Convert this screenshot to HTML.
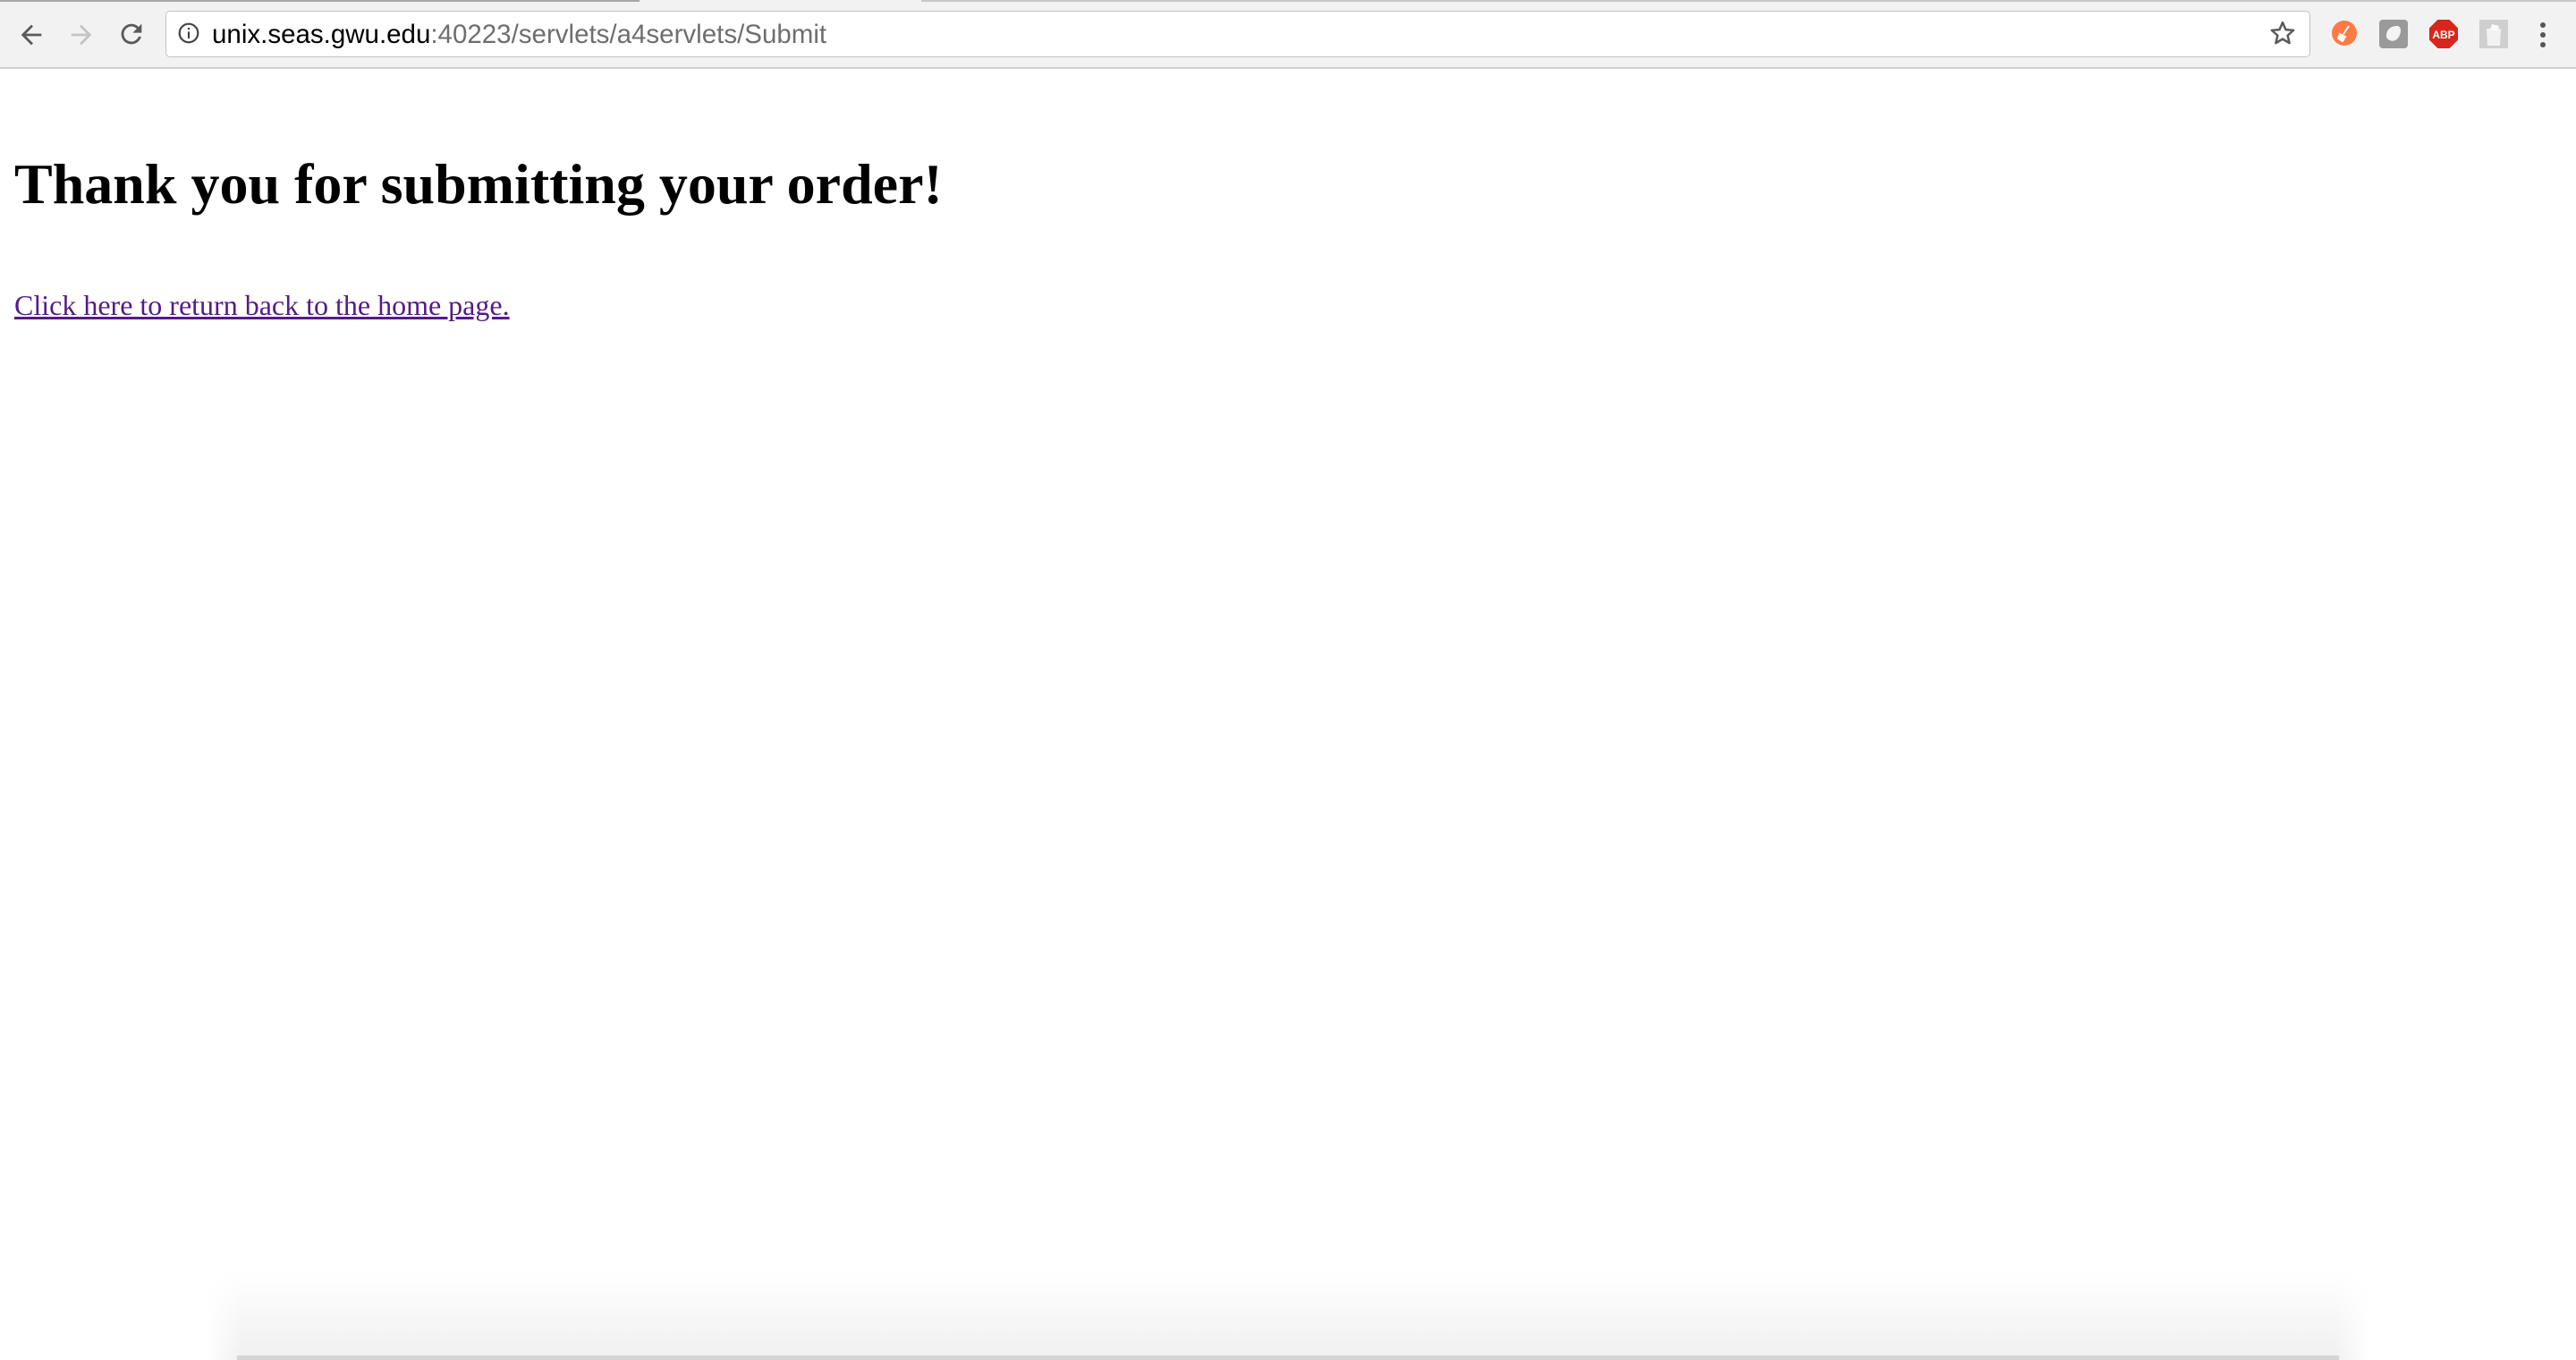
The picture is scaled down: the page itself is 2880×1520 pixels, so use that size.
<!DOCTYPE html>
<html><head><meta charset="utf-8"><style>
html,body{margin:0;padding:0;width:2880px;height:1520px;overflow:hidden;background:#fff;position:relative}
.tb{position:absolute;left:0;top:0;width:2880px;height:75px;background:#f2f2f2;border-bottom:2px solid #d0d0d0}
.tl{position:absolute;top:0;height:2px;background:#a8a8a8}
.addr{position:absolute;left:185px;top:12px;width:2396px;height:50px;background:#fff;border:1px solid #c4c4c4;border-radius:5px}
.url{position:absolute;left:237px;top:21px;font:29.5px "Liberation Sans",sans-serif;color:#000;white-space:nowrap;line-height:36px}
.url span{color:#6e6e6e}
svg{position:absolute}
h1{position:absolute;left:16px;top:174px;margin:0;font:bold 64px/1 "Liberation Serif",serif;white-space:nowrap}
a{position:absolute;left:16px;top:325px;font:32px/1 "Liberation Serif",serif;color:#551a8b;text-decoration:underline;white-space:nowrap}
.sh{position:absolute;left:230px;width:2420px;top:1420px;height:100px;background:linear-gradient(#fff,#f0f0f0);-webkit-mask:linear-gradient(90deg,transparent,#000 40px,#000 2380px,transparent);}
.bl{position:absolute;left:265px;width:2350px;top:1515px;height:5px;background:#d4d4d4}
</style></head><body>
<div class="tb"></div>
<div class="tl" style="left:0;width:715px"></div>
<div class="tl" style="left:1030px;width:1850px;background:#c8c8c8"></div>
<svg style="left:18px;top:22px" width="34" height="34" viewBox="0 0 24 24"><path d="M20 11H7.8l5.6-5.6L12 4l-8 8 8 8 1.4-1.4L7.8 13H20z" fill="#5a5a5a"/></svg>
<svg style="left:74px;top:22px" width="34" height="34" viewBox="0 0 24 24"><path d="M4 11h12.2l-5.6-5.6L12 4l8 8-8 8-1.4-1.4 5.6-5.6H4z" fill="#c4c4c4"/></svg>
<svg style="left:130px;top:21px" width="34" height="34" viewBox="0 0 24 24"><path d="M17.6 6.4A8 8 0 1 0 19.7 14h-2.1a6 6 0 1 1-1.4-6.2L13 11h7V4z" fill="#5a5a5a"/></svg>
<div class="addr"></div>
<svg style="left:198px;top:24px" width="26" height="26" viewBox="0 0 24 24"><circle cx="12" cy="12" r="9.5" fill="none" stroke="#444" stroke-width="2"/><rect x="11" y="10.5" width="2" height="7" fill="#444"/><rect x="11" y="6.5" width="2" height="2" fill="#444"/></svg>
<div class="url">unix.seas.gwu.edu<span>:40223/servlets/a4servlets/Submit</span></div>
<svg style="left:2537px;top:22px" width="30" height="30" viewBox="0 0 24 24"><path d="M12 2.5l2.8 6.4 6.9.6-5.2 4.6 1.6 6.8L12 17.3l-6.1 3.6 1.6-6.8-5.2-4.6 6.9-.6z" fill="none" stroke="#5a5a5a" stroke-width="2" stroke-linejoin="round"/></svg>
<svg style="left:2606px;top:22px" width="30" height="30" viewBox="0 0 30 30"><circle cx="15" cy="15" r="14" fill="#ff7a45"/><path d="M20 7l-6 9M10 16l6 3-3 5-5-3z" stroke="#fff" stroke-width="2" fill="#fff"/></svg>
<svg style="left:2660px;top:22px" width="32" height="32" viewBox="0 0 32 32"><rect x="0" y="0" width="32" height="32" rx="4" fill="#9a9a9a"/><path d="M8 18c0-7 5-11 12-11 4 0 5 5 3 10-2 6-8 8-11 6-3-1-4-3-4-5z" fill="#f4f4f4"/></svg>
<svg style="left:2716px;top:22px" width="32" height="32" viewBox="0 0 32 32"><polygon points="9.4,0 22.6,0 32,9.4 32,22.6 22.6,32 9.4,32 0,22.6 0,9.4" fill="#d8261c"/><text x="16" y="21" font-family="Liberation Sans" font-weight="bold" font-size="12" fill="#fff" text-anchor="middle">ABP</text></svg>
<svg style="left:2772px;top:22px" width="32" height="32" viewBox="0 0 32 32"><rect width="32" height="32" fill="#cfcfcf"/><path d="M8 10h16l-1 19H9z" fill="#f2f2f2"/><path d="M14 5l8 2-2 6-8-2z" fill="#fafafa"/></svg>
<svg style="left:2836px;top:24px" width="14" height="30" viewBox="0 0 14 30"><circle cx="7" cy="4" r="3" fill="#555"/><circle cx="7" cy="15" r="3" fill="#555"/><circle cx="7" cy="26" r="3" fill="#555"/></svg>
<h1>Thank you for submitting your order!</h1>
<a>Click here to return back to the home page.</a>
<div class="sh"></div>
<div class="bl"></div>
</body></html>
